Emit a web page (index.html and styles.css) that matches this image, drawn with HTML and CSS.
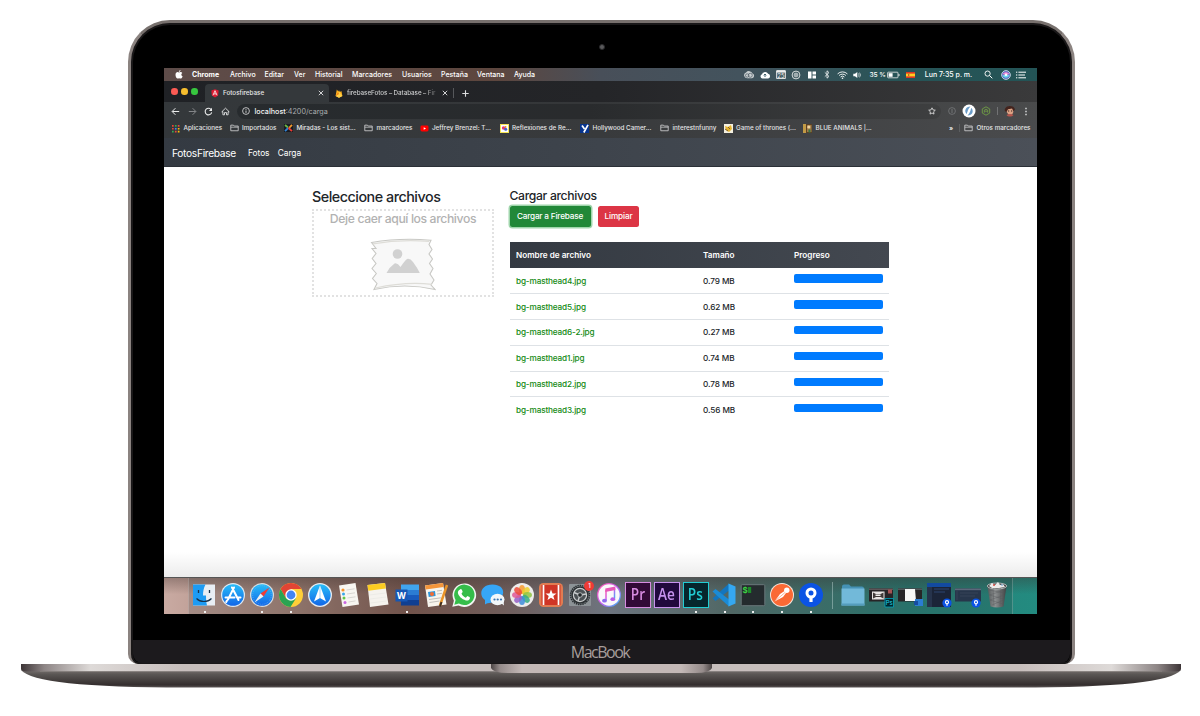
FILE: index.html
```html
<!DOCTYPE html>
<html lang="es">
<head>
<meta charset="utf-8">
<title>FotosFirebase</title>
<link rel="stylesheet" href="styles.css">
</head>
<body>
<svg class="defs" width="0" height="0" aria-hidden="true">
  <defs>
    <symbol id="folder" viewBox="0 0 10 9"><path d="M.8 7.600V1.300h3l.9 1h4.500v5.300z" fill="none" stroke="#d5d6d7" stroke-width=".9"/><path d="M.8 3.600h8.400" stroke="#d5d6d7" stroke-width=".8"/></symbol>
    <symbol id="close" viewBox="0 0 6 6"><path d="M.8.8l4.400 4.400M5.200.8L.8 5.200" stroke="#e3e4e5" stroke-width=".9"/></symbol>
    <symbol id="tree" viewBox="0 0 26 26"><circle cx="13" cy="13" r="12" fill="#0b53e4"/><circle cx="13" cy="11" r="4" fill="none" stroke="#fff" stroke-width="3"/><path d="M11.400 14h3.200v6h-3.200z" fill="#fff"/></symbol>
    <linearGradient id="blue" x2="0" y2="1"><stop stop-color="#28bdf8"/><stop offset="1" stop-color="#1266e8"/></linearGradient>
    <linearGradient id="lip" x2="1" y2="0"><stop stop-color="#3d3537"/><stop offset=".02" stop-color="#8d8585"/><stop offset=".06" stop-color="#dedad8"/><stop offset=".14" stop-color="#c7bebc"/><stop offset=".86" stop-color="#c7bebc"/><stop offset=".94" stop-color="#dedad8"/><stop offset=".98" stop-color="#8d8585"/><stop offset="1" stop-color="#3d3537"/></linearGradient>
    <linearGradient id="belly" x2="0" y2="1"><stop stop-color="#77716f"/><stop offset=".25" stop-color="#5a5654"/><stop offset=".85" stop-color="#342e2e"/><stop offset="1" stop-color="#5b5555"/></linearGradient>
    <linearGradient id="notch" x2="1" y2="0"><stop stop-color="#4c4545"/><stop offset=".04" stop-color="#958b8a"/><stop offset=".14" stop-color="#c3b8b6"/><stop offset=".86" stop-color="#c3b8b6"/><stop offset=".96" stop-color="#958b8a"/><stop offset="1" stop-color="#4c4545"/></linearGradient>
    <linearGradient id="music" x2="1" y2="1"><stop stop-color="#ff5ca8"/><stop offset=".5" stop-color="#c75bf0"/><stop offset="1" stop-color="#2dbdf5"/></linearGradient>
    <linearGradient id="can" x2="1" y2="0"><stop stop-color="#55595a"/><stop offset=".4" stop-color="#8d9091"/><stop offset="1" stop-color="#3e4142"/></linearGradient>
  </defs>
</svg>
<div class="laptop">
  <div class="lid">
    <div class="bezel-top"><span class="camera"></span></div>
    <div class="screen">
      <div class="menubar">
        <svg class="apple" width="8" height="9" viewBox="0 0 8 9"><path d="M5.500 0C5.600 1 4.800 1.900 3.900 1.900 3.800 1 4.600.1 5.500 0zM4 2.400c.4 0 .9-.4 1.700-.4.6 0 1.200.3 1.600.9C5.900 3.700 6.100 5.700 7.600 6.200 7.200 7.400 6.400 8.600 5.600 8.600 5.100 8.600 4.800 8.300 4.100 8.300 3.500 8.300 3.100 8.600 2.600 8.600 1.700 8.600.5 6.700.5 4.900.5 3.100 1.600 2.100 2.600 2.100c.6 0 1.100.3 1.400.3z" fill="#fff"/></svg>
        <b>Chrome</b><span>Archivo</span><span>Editar</span><span>Ver</span><span>Historial</span><span>Marcadores</span><span>Usuarios</span><span>Pestaña</span><span>Ventana</span><span>Ayuda</span>
        <div class="status">
          <svg width="12" height="8" viewBox="0 0 12 8"><path d="M4 7.300a3 3 0 01-1-5.800A3.800 3.800 0 019.500 2.500a2.500 2.500 0 01-.5 4.800z" fill="#c9cfd1"/><circle cx="4.200" cy="4.500" r="1.700" fill="none" stroke="#4b5862" stroke-width=".7"/><circle cx="7.300" cy="4.300" r="2" fill="none" stroke="#4b5862" stroke-width=".7"/></svg>
          <svg width="12" height="8" viewBox="0 0 12 8"><path d="M3.500 7.500a2.200 2.200 0 01-.4-4.300 3.200 3.200 0 016-.4 2.400 2.400 0 01.1 4.700z" fill="#fff"/><path d="M6 6V3.200M4.700 4.300L6 3l1.300 1.300" fill="none" stroke="#42606a"/></svg>
          <svg width="10" height="9" viewBox="0 0 10 9"><path d="M.7.600h8.600v8H.7z" fill="none" stroke="#eee"/><path d="M.5 1.800h9" stroke="#eee" stroke-width="1.600"/><text x="5" y="7.600" font-size="5.500" text-anchor="middle" fill="#eee">25</text></svg>
          <svg width="10" height="10" viewBox="0 0 10 10"><circle cx="5" cy="5" r="3.900" fill="none" stroke="#e8eaea" stroke-width=".9"/><circle cx="5" cy="5" r="1.900" fill="none" stroke="#e8eaea" stroke-width=".8"/><path d="M5 4v2" stroke="#fff"/></svg>
          <svg width="8" height="8" viewBox="0 0 8 8"><path d="M0 .5h3.500v7H0zM4.500.5H8V3.600H4.500zM4.500 4.600H8V7.500H4.500z" fill="#fff"/></svg>
          <svg width="6" height="9" viewBox="0 0 6 9"><path d="M.8 2.400l4.200 4L3 8.200V.8L5 2.600l-4.200 4" fill="none" stroke="#fff" stroke-width=".75"/></svg>
          <svg width="11" height="8" viewBox="0 0 11 8"><path d="M.6 2.900a7 7 0 019.800 0M2.100 4.500a4.900 4.900 0 016.800 0M3.600 6a2.800 2.800 0 013.800 0" fill="none" stroke="#fff" stroke-width=".9"/><circle cx="5.500" cy="7.200" r=".8" fill="#fff"/></svg>
          <svg width="8" height="8" viewBox="0 0 8 8"><path d="M.3 2.700h1.700L4.300.9v6.200L2 5.300H.3z" fill="#fff"/><path d="M5.400 2.400a2.400 2.400 0 010 3.200M6.500 1.600a3.600 3.600 0 010 4.800" fill="none" stroke="#fff" stroke-width=".6"/></svg>
          <span class="percent">35 %</span>
          <svg width="13" height="8" viewBox="0 0 13 8"><rect x=".6" y="1.200" width="10.400" height="5.600" rx=".8" fill="none" stroke="#eee" stroke-width=".8"/><path d="M1.600 2.200h4v3.600h-4z" fill="#fff"/><path d="M12 3v2" stroke="#eee" stroke-width=".9"/></svg>
          <svg width="9" height="6" viewBox="0 0 9 6"><path d="M0 0h9v6H0z" fill="#dd3524"/><path d="M0 1.600h9v2.800H0z" fill="#ffce20"/><path d="M2 2h1.300v2H2z" fill="#b36b28"/></svg>
          <span class="clock">Lun 7:35 p. m.</span>
          <svg width="9" height="9" viewBox="0 0 9 9"><circle cx="3.600" cy="3.600" r="2.600" fill="none" stroke="#fff" stroke-width=".9"/><path d="M5.500 5.500L8.300 8.300" stroke="#fff"/></svg>
          <svg width="10" height="10" viewBox="0 0 10 10"><circle cx="5" cy="5" r="4.400" fill="#5b6fc2" stroke="#d6e5ec" stroke-width=".8"/><path d="M1.500 4c2-2.500 5-2.500 7 0-2 1-5 1-7 0z" fill="#ef86d2"/><path d="M1.400 5.500c2 3 5 3 7.200 0-2-1-5-1-7.200 0z" fill="#6bd9f2"/><circle cx="5" cy="4.800" r="1.300" fill="#fff"/></svg>
          <svg width="10" height="8" viewBox="0 0 10 8"><path d="M2.400 1.200H10M2.400 4H9M2.400 6.800H10M0 1.200h1.300M0 4h1.300M0 6.800h1.300" stroke="#fff"/></svg>
        </div>
      </div>
      <div class="tabs">
        <div class="lights"><i class="red"></i><i class="amber"></i><i class="green"></i></div>
        <div class="tab active">
          <svg width="8" height="9" viewBox="0 0 8 9"><path d="M4 .3l3.700 1.300-.6 5L4 8.600.9 6.600l-.6-5z" fill="#dd1b32"/><path d="M2 6.300L4 1.700l2 4.600M2.900 4.900h2.200" fill="none" stroke="#fff" stroke-width=".8"/></svg>
          <span>Fotosfirebase</span>
          <svg class="x" width="6" height="6"><use href="#close"/></svg>
        </div>
        <div class="tab">
          <svg width="8" height="9" viewBox="0 0 8 9"><path d="M.6 7L1.800.5l1.500 2L4 1.300l.9 1.700L6.400 2l1 5L4 8.800z" fill="#ffb41f"/><path d="M.6 7l3.800-4.200L5.600 5 7.400 7 4 8.800z" fill="#ffd24b"/><path d="M.6 7L3 3.200l1.200 1.900z" fill="#f48212"/></svg>
          <span class="faded">firebaseFotos – Database – Fir</span>
          <svg class="x" width="6" height="6"><use href="#close"/></svg>
        </div>
        <span class="tab-divider"></span>
        <svg class="plus" width="7" height="7" viewBox="0 0 7 7"><path d="M3.500.3v6.400M.3 3.500h6.400" stroke="#dddedf" stroke-width="1.100"/></svg>
      </div>
      <div class="toolbar">
        <div class="nav-icons">
          <svg width="9" height="9" viewBox="0 0 9 9"><path d="M8.200 4.500H1.300M4.400 1.200L1.100 4.500l3.300 3.300" fill="none" stroke="#eceded" stroke-width="1"/></svg>
          <svg width="9" height="9" viewBox="0 0 9 9"><path d="M.8 4.500h6.900M4.600 1.200l3.300 3.300-3.300 3.300" fill="none" stroke="#8d9092" stroke-width=".9"/></svg>
          <svg width="9" height="9" viewBox="0 0 9 9"><path d="M7.400 3A3.300 3.300 0 107.700 5.300" fill="none" stroke="#eceded" stroke-width="1.100"/><path d="M8 .8v3.100H4.900z" fill="#eceded"/></svg>
          <svg width="9" height="9" viewBox="0 0 9 9"><path d="M.8 4.800L4.500 1.200l3.700 3.600H7.100v3H5.500V5.600h-2v2.200H1.900v-3z" fill="none" stroke="#eceded" stroke-width=".85"/></svg>
        </div>
        <div class="url">
          <svg width="8" height="8" viewBox="0 0 8 8"><circle cx="4" cy="4" r="3.400" fill="none" stroke="#dfe0e1" stroke-width=".8"/><path d="M4 3.500v2.400M4 2v.8" stroke="#dfe0e1" stroke-width=".9"/></svg>
          <span>localhost<em>:4200/carga</em></span>
          <svg class="star" width="8" height="8" viewBox="0 0 8 8"><path d="M4 .8l1 2.100 2.300.3-1.700 1.600.4 2.300-2-1.100-2 1.100.4-2.300L.7 3.200 3 2.900z" fill="none" stroke="#e8e9e9" stroke-width=".8"/></svg>
        </div>
        <div class="extensions">
          <svg width="8" height="8" viewBox="0 0 8 8"><circle cx="4" cy="4" r="3.400" fill="none" stroke="#77797b" stroke-width=".8"/><path d="M4 2v4" stroke="#77797b" stroke-width=".9"/></svg>
          <svg width="14" height="14" viewBox="0 0 14 14"><circle cx="7" cy="7" r="6.500" fill="#fff"/><path d="M8.500 2.500C3.500 2.500 2 7 4.500 10 5.500 9.500 5 6 8.500 2.500zM5.500 11.500C10.500 11.500 12 7 9.500 4 8.500 4.500 9 8 5.500 11.500z" fill="#6a9cc8"/></svg>
          <svg width="10" height="10" viewBox="0 0 10 10"><path d="M5 .8l3.700 2.100v4.200L5 9.200 1.300 7.100V2.900z" fill="none" stroke="#719f45" stroke-width=".9"/><path d="M3.300 6.700V4.200L5 3.300l1.700.9v2.500M3.300 5.200h3.400" fill="none" stroke="#719f45" stroke-width=".8"/></svg>
          <i class="bar"></i>
          <svg width="12" height="12" viewBox="0 0 12 12"><path d="M2 5c0-5 8-4.500 7.500.5C9.200 8.500 8 10 6.500 10S2.500 8 2 5z" fill="#dda284"/><path d="M.8 6C0 0 10-.8 11 4.500l-1.500 1.800L8 3.500 4 4.200 2.500 7z" fill="#42231d"/><path d="M2.500 10c2-1.500 5-1.500 7 0-1.500 2-5.500 2-7 0z" fill="#b5564d"/><path d="M4 6h1.200M7 6h1.200" stroke="#352421"/></svg>
          <svg width="4" height="9" viewBox="0 0 4 9"><path d="M1.300.8h1.400v1.400H1.300zM1.300 3.800h1.400v1.400H1.300zM1.300 6.800h1.400v1.400H1.300z" fill="#dedfe0"/></svg>
        </div>
      </div>
      <div class="bookmarks">
        <div><svg width="9" height="9" viewBox="0 0 9 9"><path d="M1 1h1.700v1.700H1zM1 3.900h1.700v1.700H1z" fill="#ea4335"/><path d="M3.900 1h1.700v1.700H3.900zM1 6.800h1.700v1.700H1z" fill="#36a852"/><path d="M6.800 1h1.700v1.700H6.800zM3.900 6.800h1.700v1.700H3.900z" fill="#e94b3c"/><path d="M3.900 3.900h1.700v1.700H3.900z" fill="#4285f4"/><path d="M6.800 3.900h1.700v1.700H6.800zM6.800 6.800h1.700v1.700H6.800z" fill="#fbbc05"/></svg>Aplicaciones</div>
        <div><svg width="9" height="8"><use href="#folder"/></svg>Importados</div>
        <div><svg width="9" height="8" viewBox="0 0 9 8"><path d="M0 0h9v8H0z" fill="#191c22"/><path d="M1 1l3 2.500" stroke="#6bb743" stroke-width="1.800"/><path d="M8 .8L5 4" stroke="#f59a2d" stroke-width="1.800"/><path d="M1 7.200L4.200 4" stroke="#3083d5" stroke-width="1.800"/><path d="M8 7.200L4.500 4" stroke="#ea3b32" stroke-width="1.800"/></svg>Miradas - Los sist...</div>
        <div><svg width="9" height="8"><use href="#folder"/></svg>marcadores</div>
        <div><svg width="9" height="7" viewBox="0 0 9 7"><rect x=".5" y=".5" width="8" height="6" rx="1.400" fill="#f00"/><path d="M3.700 2.200v2.600L6 3.500z" fill="#fff"/></svg>Jeffrey Brenzel: T...</div>
        <div><svg width="9" height="9" viewBox="0 0 9 9"><path d="M0 0h9v9H0z" fill="#f5e456"/><path d="M1 1h7v7H1z" fill="#fff"/><circle cx="3.500" cy="4" r="1.700" fill="#e63b70"/><circle cx="5.700" cy="5.300" r="1.500" fill="#4560c9"/><circle cx="5.500" cy="3" r="1" fill="#eb8b2b"/></svg>Reflexiones de Re...</div>
        <div><svg width="9" height="9" viewBox="0 0 9 9"><path d="M0 0h9v9H0z" fill="#07348e"/><path d="M2 1.500l2.500 3.600M8 .8L3.800 8.500" stroke="#fff" stroke-width="1.700"/></svg>Hollywood Camer...</div>
        <div><svg width="9" height="8"><use href="#folder"/></svg>interestnfunny</div>
        <div><svg width="9" height="9" viewBox="0 0 9 9"><path d="M0 0h9v9H0z" fill="#f5f0e0"/><path d="M1 2l3 1 3-2 1 4-3 3-3-2z" fill="#e5b32c"/><path d="M1 5l3 2M4 3l2 2" stroke="#805b2b"/></svg>Game of thrones (...</div>
        <div><svg width="9" height="9" viewBox="0 0 9 9"><path d="M0 0h9v9H0z" fill="#5a4025"/><path d="M0 0h3v9H0z" fill="#c29a45"/><path d="M4 1h4.500v7H4z" fill="#a27c47"/><circle cx="5.800" cy="3" r="1.600" fill="#edd29f"/><path d="M5.500 5.500h2v3h-2z" fill="#367447"/></svg>BLUE ANIMALS |...</div>
        <b>»</b>
        <div class="other"><svg width="9" height="8"><use href="#folder"/></svg>Otros marcadores</div>
      </div>
      <nav class="navbar"><a class="brand">FotosFirebase</a><a>Fotos</a><a>Carga</a></nav>
      <main class="page">
        <section class="pick">
          <h1>Seleccione archivos</h1>
          <div class="drop">
            <p>Deje caer aquí los archivos</p>
            <svg width="66" height="54" viewBox="0 0 66 54"><path d="M1.500 4.500Q30-.5 61 2.200L59 6.500l3 5-3 4.500 3.500 5-3 4.500 3.500 5-3 5.500 4 6-3 5 4 4.500Q35 44.500 4 51.500l3-6-4.500-5 3.800-5-4.300-5 4-5-3.800-5 3.800-5-4-5L6 10.500z" fill="#f8f8f8" stroke="#c8c8c4" stroke-width="1.100"/><path d="M3 5.800Q30 1 59 3.300M5.500 50Q35 43.500 62 46.300" fill="none" stroke="#deddd8" stroke-width="1.200"/><circle cx="27.500" cy="16" r="4.800" fill="#d1d1d1"/><path d="M16.500 35q3-6 8-9.500 3-1 6 3.500 4-6 6.500-8 3-1 6 3 4.500 6 6.800 11z" fill="#d1d1d1"/></svg>
          </div>
        </section>
        <section class="upload">
          <h2>Cargar archivos</h2>
          <div class="buttons"><button class="btn save">Cargar a Firebase</button><button class="btn clear">Limpiar</button></div>
          <table>
            <thead><tr><th class="name">Nombre de archivo</th><th class="size">Tamaño</th><th>Progreso</th></tr></thead>
            <tbody>
              <tr><td>bg-masthead4.jpg</td><td>0.79 MB</td><td><div class="progress"></div></td></tr>
              <tr><td>bg-masthead5.jpg</td><td>0.62 MB</td><td><div class="progress"></div></td></tr>
              <tr><td>bg-masthead6-2.jpg</td><td>0.27 MB</td><td><div class="progress"></div></td></tr>
              <tr><td>bg-masthead1.jpg</td><td>0.74 MB</td><td><div class="progress"></div></td></tr>
              <tr><td>bg-masthead2.jpg</td><td>0.78 MB</td><td><div class="progress"></div></td></tr>
              <tr><td>bg-masthead3.jpg</td><td>0.56 MB</td><td><div class="progress"></div></td></tr>
            </tbody>
          </table>
        </section>
      </main>
      <div class="desktop">
        <div class="dock">
          <div class="app on"><svg viewBox="0 0 26 26"><path d="M2 2.500h22v21H2z" fill="#e8eef4"/><path d="M2 2.500h12.500c-2 4-2.500 7-2.500 11h3c0 4 .3 7 1 10H2z" fill="#1d9bf3"/><path d="M7.500 8v3M18.500 8v3" stroke="#16324c" stroke-width="1.300"/><path d="M5.500 16.500c4 4 11 4 15 0" fill="none" stroke="#16324c" stroke-width="1.200"/></svg></div>
          <div class="app"><svg viewBox="0 0 26 26"><circle cx="13" cy="13" r="12" fill="#dfe9f2"/><circle cx="13" cy="13" r="10.800" fill="url(#blue)"/><path d="M14 5.500L8 17.500M12 5.500l6.500 12.500M5.500 15.500h9M17 15.500h3.500M7 18.500l-.8 1.500" stroke="#fff" stroke-width="2" stroke-linecap="round"/></svg></div>
          <div class="app on"><svg viewBox="0 0 26 26"><circle cx="13" cy="13" r="12" fill="#d9dde0"/><circle cx="13" cy="13" r="10.800" fill="url(#blue)"/><circle cx="13" cy="13" r="9.300" fill="none" stroke="#76bdf2" stroke-width=".8" stroke-dasharray=".7 1.300"/><path d="M20.500 5.500L14.500 14.500 11.500 11.500z" fill="#f03b35"/><path d="M5.500 20.500L11.500 11.500 14.500 14.500z" fill="#eef0f2"/></svg></div>
          <div class="app on"><svg viewBox="0 0 26 26"><circle cx="13" cy="13" r="12" fill="#ffcf38"/><path d="M2.600 7A12 12 0 0123.400 7H13L7.800 16z" fill="#e14434"/><path d="M2.600 7A12 12 0 0012.500 25l5.700-9q-6 4-10.400 0z" fill="#2aa352"/><circle cx="13" cy="13" r="5.700" fill="#fff"/><circle cx="13" cy="13" r="4.400" fill="#4285f4"/></svg></div>
          <div class="app"><svg viewBox="0 0 26 26"><circle cx="13" cy="13" r="12" fill="#e8edf2"/><circle cx="13" cy="13" r="10.700" fill="url(#blue)"/><path d="M13 3.500l6 16-6-3.500-6 3.500z" fill="#fff"/><path d="M13 5v11" stroke="#8fc5f4" stroke-width=".8"/></svg></div>
          <div class="app"><svg viewBox="0 0 26 26"><path d="M3 3.500l16.500-2.500L23 22.500 6.500 25z" fill="#f8f6f1"/><circle cx="7" cy="8" r="1.600" fill="#f7932a"/><circle cx="7.500" cy="12" r="1.500" fill="#39a7e8"/><circle cx="8" cy="16" r="1.500" fill="#63c646"/><circle cx="9" cy="20.500" r="1.500" fill="#ca65e1"/><path d="M10.500 8l8-1.200M11 12l8-1.200M11.500 16l8-1.200M12.500 20l7-1.100" stroke="#ccc9c4" stroke-width=".7"/></svg></div>
          <div class="app"><svg viewBox="0 0 26 26"><path d="M2.500 3L20 1l3.500 21.500-18.500 2.500z" fill="#f5f3ee"/><path d="M2.500 3L20 1l.9 5.500L3.300 8.800z" fill="#fccc22"/><path d="M4.500 13l16-2M5 17l16-2M5.500 21l16-2" stroke="#e6e5e1" stroke-width=".6"/></svg></div>
          <div class="app on"><svg viewBox="0 0 26 26"><path d="M7 2.500h18v6H7z" fill="#41a5ee"/><path d="M7 8h18v5.500H7z" fill="#2b7cd3"/><path d="M7 13h18v5.500H7z" fill="#185abd"/><path d="M7 18h18v5.500H7z" fill="#103f91"/><path d="M1.500 7.500h12v12h-12z" fill="#1557b5"/><text x="7.500" y="17" text-anchor="middle" font-size="9" font-weight="700" fill="#fff">W</text></svg></div>
          <div class="app"><svg viewBox="0 0 26 26"><path d="M2 3.500L20 1l3.500 21.500L5 25z" fill="#f7f5ee"/><path d="M2 3.500L20 1l.7 4-18 2.500z" fill="#f3953b"/><path d="M5 10l7-1 .6 5-6.900 1z" fill="#2f96da"/><circle cx="9" cy="12" r="2" fill="#f46d31"/><path d="M14 9l5-.7M14 12l5-.7M6 17.500l12-1.700M6.500 20.500l10-1.500" stroke="#b4b3ae" stroke-width=".8"/><path d="M24 3L17 23.500" stroke="#e9942a" stroke-width="2.500"/><path d="M18.500 20L17 24.500" stroke="#403023" stroke-width="2"/></svg></div>
          <div class="app"><svg viewBox="0 0 26 26"><path d="M1.300 24.700l1.600-6A11.800 11.800 0 1113 25a12 12 0 01-5.500-1.500z" fill="#f2f5f2"/><path d="M3.300 22.700l1.300-4.600A10.200 10.200 0 1113 23a10 10 0 01-5.100-1.400z" fill="#35bd4a"/><path d="M9.400 7.200c1-.9 2 1.700 2.300 2.700L10.500 11.500c.8 2 2.400 3.400 4.300 4.200l1.600-1.600c1.300.5 2.500 1 2.600 1.800-.2 2-2.300 3-4.100 2.500-4.300-1-7.300-4.300-8-7.300-.2-1.500.8-3.300 2.500-3.900z" fill="#fff"/></svg></div>
          <div class="app"><svg viewBox="0 0 26 26"><path d="M5 18C-2 13 1 2.500 12.500 2.500S26 12 19.500 17 8 20 5 22.500z" fill="#36a6f7"/><ellipse cx="17.500" cy="17.500" rx="7" ry="5.700" fill="#f2f7fa"/><path d="M21 21l3 2.500-.5-4.500z" fill="#f2f7fa"/><circle cx="14.500" cy="17.500" r="1.100" fill="#3774b0"/><circle cx="17.700" cy="17.500" r="1.100" fill="#3774b0"/><circle cx="21" cy="17.500" r="1.100" fill="#3774b0"/></svg></div>
          <div class="app"><svg viewBox="0 0 26 26"><circle cx="13" cy="13" r="12" fill="#eeeceb"/><g fill-opacity=".85"><ellipse cx="13" cy="7.500" rx="3" ry="4.500" fill="#f79b2f"/><ellipse cx="13" cy="7.500" rx="3" ry="4.500" fill="#ebcf2d" transform="rotate(45 13 13)"/><ellipse cx="13" cy="7.500" rx="3" ry="4.500" fill="#8fc641" transform="rotate(90 13 13)"/><ellipse cx="13" cy="7.500" rx="3" ry="4.500" fill="#35ad83" transform="rotate(135 13 13)"/><ellipse cx="13" cy="7.500" rx="3" ry="4.500" fill="#3d8ddb" transform="rotate(180 13 13)"/><ellipse cx="13" cy="7.500" rx="3" ry="4.500" fill="#9560c7" transform="rotate(225 13 13)"/><ellipse cx="13" cy="7.500" rx="3" ry="4.500" fill="#df5897" transform="rotate(270 13 13)"/><ellipse cx="13" cy="7.500" rx="3" ry="4.500" fill="#ec4b38" transform="rotate(315 13 13)"/></g></svg></div>
          <div class="app"><svg viewBox="0 0 26 26"><rect x="1" y="1" width="24" height="24" rx="4.500" fill="#e17b51"/><path d="M3.500 3h19v20h-19z" fill="#cf3526"/><path d="M5.500 3v20M20.500 3v20" stroke="#fff" stroke-width="1.700"/><path d="M13 7.500l1.500 3.900 4 .2-3.200 2.500 1.200 4-3.500-2.400-3.500 2.400 1.200-4-3.200-2.500 4-.2z" fill="#fff"/></svg></div>
          <div class="app"><svg viewBox="0 0 26 26"><rect x="2" y="2" width="22" height="22" rx="1" fill="#8d9397"/><circle cx="13" cy="13" r="9.500" fill="none" stroke="#2b3033" stroke-width="1.500" stroke-dasharray="1.500 .7"/><circle cx="13" cy="13" r="8.700" fill="#2b3033"/><circle cx="13" cy="13" r="6.600" fill="#4b5154" stroke="#c9cccd" stroke-width="1.200"/><path d="M13 13L7 10.500M13 13l6.200-1M13 13l-2 6" stroke="#c9cccd" stroke-width="1.400"/><circle cx="13" cy="13" r="2.300" fill="#22282a" stroke="#c9cccd" stroke-width=".8"/></svg><b class="badge">1</b></div>
          <div class="app"><svg viewBox="0 0 26 26"><circle cx="13" cy="13" r="12" fill="url(#music)"/><circle cx="13" cy="13" r="10.700" fill="#faf8fb"/><path d="M10 18.500V8.500l8.500-1.800v10" fill="none" stroke="url(#music)" stroke-width="1.500"/><path d="M9.300 6.600l10-2v3.400l-10 2z" fill="#e758b8"/><ellipse cx="8.500" cy="18.700" rx="2.400" ry="1.900" fill="#8c69ee"/><ellipse cx="16.800" cy="17.200" rx="2.400" ry="1.900" fill="#ba5be6"/></svg></div>
          <div class="app tile pr"><span>Pr</span></div>
          <div class="app tile ae"><span>Ae</span></div>
          <div class="app tile ps on"><span>Ps</span></div>
          <div class="app on"><svg viewBox="0 0 26 26"><path d="M18 1.500v7L4.500 19 1.500 16.500z" fill="#1375bd"/><path d="M18 24.500v-7L4.500 7 1.500 9.500z" fill="#1b8bd6"/><path d="M17.500 1.500l7 3v17l-7 3z" fill="#35a8f0"/></svg></div>
          <div class="app on"><svg viewBox="0 0 26 26"><rect x="1.200" y="2.700" width="23.600" height="21" rx="1" fill="#242b2e" stroke="#69777a"/><text x="2.600" y="11" font-size="8" font-weight="700" fill="#3bd342">$</text><path d="M8 5h3.200v6H8z" fill="#1b8c29"/></svg></div>
          <div class="app on"><svg viewBox="0 0 26 26"><circle cx="13" cy="13" r="12" fill="#f3e6de"/><circle cx="13" cy="13" r="11" fill="#fa6934"/><path d="M5.500 19.500L11 12l4.500-3 1.500 2-3 4z" fill="#fff"/><circle cx="17.800" cy="8.200" r="2.700" fill="#fff"/><path d="M6 19l10-8.500" stroke="#f5936c" stroke-width=".7"/></svg></div>
          <div class="app on"><svg viewBox="0 0 26 26"><use href="#tree"/></svg></div>
          <i class="separator"></i>
          <div class="app"><svg viewBox="0 0 26 26"><path d="M2 4.500q0-2 2-2h5l2 2h11q2 0 2 2v14H2z" fill="#4592b5"/><path d="M1.500 6.500h23v17h-23z" fill="#72b9d9"/><path d="M1.500 22.500h23" stroke="#559dbd" stroke-width="2"/></svg></div>
          <div class="app"><svg viewBox="0 0 26 26"><path d="M1 6.500h24v13H1z" fill="#272426"/><path d="M1 6.500h24v1.500H1z" fill="#5e5558"/><path d="M4 9.500h12.500v8H4z" fill="#e8e4e2"/><path d="M5 10.500l3 1.500h4.500l3-1.500v6l-3-1.500H8l-3 1.500z" fill="#413a38"/><path d="M7.500 12.500h5v1.500h-5z" fill="#f1eeec"/><path d="M20 7.500h4v4h-4z" fill="#a45353"/><path d="M17 16.500h8.500V25H17z" fill="#00252d" stroke="#00a5bc" stroke-width=".8"/><text x="21.200" y="23" text-anchor="middle" font-size="6" fill="#25d6e5">Ps</text></svg></div>
          <div class="app"><svg viewBox="0 0 26 26"><path d="M1 6.500h24v13H1z" fill="#272527"/><path d="M1 6.500h24V8H1z" fill="#52575a"/><path d="M8 7h10l1 12H8z" fill="#f7f7f6"/><path d="M18 17h8v7h-8z" fill="#2b7cd3"/><path d="M17 19h4v4h-4z" fill="#174da0"/></svg></div>
          <div class="app"><svg viewBox="0 0 26 26"><path d="M1 1h24v24H1z" fill="#1b2438"/><path d="M1 1h24v4H1z" fill="#124aa0"/><path d="M1 5h5v20H1z" fill="#26334c"/><path d="M8 7h15M8 10h11" stroke="#34538b" stroke-width=".7"/><use href="#tree" x="16" y="16" width="10" height="10"/></svg></div>
          <div class="app"><svg viewBox="0 0 26 26"><path d="M0 6.500h26v13H0z" fill="#27364b"/><path d="M0 6.500h26v1.700H0z" fill="#5d687b"/><path d="M2 9v9M5 11h18M5 14h15" stroke="#3b485b" stroke-width=".8"/><use href="#tree" x="16" y="16" width="10" height="10"/></svg></div>
          <div class="app"><svg viewBox="0 0 26 26"><path d="M3.500 4h19l-3 20.500q-6.500 2-13 0z" fill="url(#can)"/><path d="M5 8l15 3M5.500 13l14 4M6 18l13 4M20.500 8l-15 5M20 13l-14 5M19.500 18L8 23M9 6l1 18M17 6l-1 18" stroke="#55595a" stroke-width=".4"/><ellipse cx="13" cy="4" rx="9.700" ry="3" fill="#404344" stroke="#b0b5b5"/><path d="M5 4l3-3 3 2 3-3 2 3 3-1 2 3-6 1H8z" fill="#ecebea"/><circle cx="10" cy="3" r="1" fill="#d5473e"/><circle cx="18" cy="3" r=".8" fill="#5a97cb"/></svg></div>
        </div>
      </div>
    </div>
    <div class="chin"><span>MacBook</span></div>
  </div>
  <svg class="base" width="1162" height="26" viewBox="0 0 1162 26"><path d="M1 6Q15 23.500 165 23.500H997Q1147 23.500 1161 6z" fill="url(#belly)"/><path d="M1 0h1160v5q0 2-5 2.500H6Q1 7 1 5z" fill="url(#lip)"/><path d="M20 7.500h1122" stroke="#837c7a" stroke-width=".8"/><path d="M471 0h221v4q-2 5-17 5H488q-15 0-17-5z" fill="url(#notch)"/></svg>
</div>
</body>
</html>
```

FILE: styles.css
```css
* { box-sizing: border-box; }
body { margin: 0; background: #fff; font-family: Inter, "Open Sans", sans-serif; color: #212529; overflow: hidden; }
svg { display: block; flex: none; }
.defs { position: absolute; }
.laptop { width: 1200px; height: 716px; padding-top: 20px; display: flex; flex-direction: column; align-items: center; }
.lid { width: 947px; height: 644px; margin-left: 3px; background: #000; border: 3px solid #8b8380; border-bottom-width: 0; border-top-color: #77706d; border-radius: 42px 42px 10px 10px; box-shadow: inset 0 0 0 2px #191718; display: flex; flex-direction: column; align-items: center; }
.bezel-top { height: 45px; padding-top: 21px; }
.camera { display: block; width: 6px; height: 6px; border-radius: 50%; background: #59595b; border: 1.500px solid #29292b; }
.screen { width: 873px; height: 546px; background: #fff; margin-left: -2px; overflow: hidden; display: flex; flex-direction: column; flex: none; }
.chin { width: 937px; height: 23px; margin-top: 26px; background: #1c1a1d; border-radius: 0 0 9px 9px; display: flex; justify-content: center; align-items: center; font: 16px "Open Sans", sans-serif; letter-spacing: -1.500px; color: #a79e9b; padding: 1px 3px 0 0; }

.menubar { height: 13px; flex: none; display: grid; grid-template-columns: 17px 38px 34.500px 29.500px 21px 37px 50px 39px 36px 37px 36px 1fr; align-items: center; padding: 0 5.500px 0 11px; font-size: 7px; font-weight: 500; line-height: 10px; color: #fff; white-space: nowrap; background: linear-gradient(90deg, #5e4c49, #5d463e 38%, #484f59 50%, #43535d 66%, #275457 84%, #235456); }
.menubar .apple { margin-left: -.5px; }
.menubar b { font-weight: 700; }
.status { justify-self: end; display: grid; grid-template-columns: 16px 16px 15.500px 15.500px 16px 14.500px 16px 13px 23px 13px 22px 54px 26px 8px 22px; align-items: center; justify-items: center; }
.percent { justify-self: start; padding-left: 6px; font-size: 6.700px; letter-spacing: -.1px; }

.tabs { height: 21px; flex: none; display: flex; align-items: flex-end; font-size: 6.300px; font-weight: 500; color: #e6e7e8; background: linear-gradient(90deg, #1f2125, #242528 50%, #3a3a3b); }
.lights { width: 41px; height: 21px; padding-left: 7px; display: flex; gap: 3.500px; align-items: center; }
.lights i { width: 6.500px; height: 6.500px; border-radius: 50%; }
.red { background: #fc5b54; }
.amber { background: #f6bd2e; }
.green { background: #37c63f; }
.tab { width: 124px; height: 18px; padding: 0 5px 0 5.500px; display: flex; align-items: center; gap: 4.500px; }
.tab.active { background: #34383b; border-radius: 4px 4px 0 0; }
.tab .x { margin-left: auto; }
.tab span { white-space: nowrap; }
.tab .faded { width: 92px; letter-spacing: -.07px; color: #c9cacb; -webkit-mask-image: linear-gradient(90deg, #000 84%, rgba(0, 0, 0, .15)); mask-image: linear-gradient(90deg, #000 84%, rgba(0, 0, 0, .15)); }
.tab-divider { width: 1px; height: 10px; background: #56585b; margin-bottom: 4px; }
.plus { margin: 0 0 5.500px 8px; }

.toolbar { height: 18px; flex: none; display: flex; align-items: center; padding-left: 7px; background: linear-gradient(90deg, #34383b, #353739 50%, #4a4b4c); }
.nav-icons { display: flex; gap: 7.600px; width: 66px; }
.url { width: 704px; height: 15px; border-radius: 8px; padding: 0 5px; display: flex; align-items: center; gap: 4.500px; font-size: 7.200px; font-weight: 500; color: #f2f2f3; background: linear-gradient(90deg, #272b2e, #292b2d 50%, #3e3f40); }
.url em { font-style: normal; font-weight: 400; color: #aaadae; }
.star { margin-left: auto; }
.extensions { display: grid; grid-template-columns: 17px 17px 17px 6px 18px 15px; margin-left: 2.500px; align-items: center; justify-items: center; }
.bar { width: 1px; height: 8px; background: #717274; }

.bookmarks { height: 18px; flex: none; display: grid; grid-template-columns: 58.500px 54.500px 80px 55.500px 80px 80.500px 80px 63.500px 79.500px 146px 10px 1fr; align-items: center; padding: 0 0 2px 7px; font-size: 6.300px; font-weight: 500; color: #e3e4e5; white-space: nowrap; background: linear-gradient(90deg, #33373a, #383a3c 50%, #4a4b4d); }
.bookmarks div { display: flex; align-items: center; gap: 3.500px; }
.bookmarks .other { border-left: 1px solid #5c5e60; padding-left: 4px; }

.navbar { height: 29px; flex: none; display: flex; align-items: center; padding: 1px 0 0 8px; font-size: 8.400px; color: #fff; background: linear-gradient(90deg, #343a42, #3e444c 50%, #4b5058); border-bottom: 1px solid #2b3037; }
.navbar a { margin-right: 8.200px; letter-spacing: -.05px; }
.navbar .brand { font-size: 10.200px; letter-spacing: -.3px; margin-right: 12px; }

.page { height: 410px; flex: none; display: grid; grid-template-columns: 182px 380px; column-gap: 15.500px; padding: 20.500px 0 0 148px; background: linear-gradient(#fff 385px, #ececec); align-items: start; }
h1, h2 { margin: 0; font-weight: 500; white-space: nowrap; }
h1 { font-size: 14.300px; line-height: 18px; height: 21.500px; letter-spacing: -.47px; }
h2 { font-size: 12.200px; line-height: 15px; height: 18.500px; letter-spacing: -.34px; }
.drop { height: 88px; border: 2px dotted #e2e2e2; display: flex; flex-direction: column; align-items: center; }
.drop p { margin: 0 0 11px; font-size: 12.200px; line-height: 16px; font-weight: 500; letter-spacing: -.38px; color: #b2b2b2; white-space: nowrap; }
.buttons { display: flex; gap: 7.500px; margin-bottom: 15px; }
.btn { height: 20.500px; padding: 0; border: 0; border-radius: 2.500px; font: 500 8.200px Inter, sans-serif; letter-spacing: -.18px; color: #fff; white-space: nowrap; }
.save { width: 81px; background: #218838; box-shadow: 0 0 0 1.500px #a0d5ac; }
.clear { width: 41px; background: #dc3545; letter-spacing: -.1px; }
table { width: 379.500px; border-collapse: collapse; table-layout: fixed; font-size: 8.200px; }
.name { width: 187px; }
.size { width: 91px; }
th { height: 26.500px; padding: 0 6.500px; text-align: left; font-weight: 600; color: #fff; }
thead { background: linear-gradient(90deg, #343a42, #434850); }
td { height: 25.800px; padding: 0 6.500px; font-weight: 500; letter-spacing: -.08px; border-bottom: 1px solid #dee2e6; }
tbody tr:last-child td { border: 0; }
td:first-child { color: #138a13; letter-spacing: -.14px; }
.progress { height: 8.500px; border-radius: 2px; background: #007bff; margin-bottom: 4.500px; }

.desktop { height: 37px; flex: none; padding-left: 24px; border-top: 1px solid #555; background: linear-gradient(rgba(60, 45, 42, .35), transparent 45%), linear-gradient(90deg, #c9aaa2, #a58378 15%, #825b51 28%, #806662 38%, #7c8491 51%, #587471 65%, #268077 85%, #238b80); }
.dock { width: 825px; height: 36px; padding-left: 1px; display: flex; background: rgba(50, 54, 54, .2); border-left: 1px solid rgba(255, 255, 255, .2); border-right: 1px solid rgba(255, 255, 255, .2); }
.app { width: 28.900px; flex: none; padding: 4px 1.450px 0; position: relative; }
.app svg { width: 26px; height: 26px; }
.app.on::after { content: ""; position: absolute; left: 13.500px; top: 32.500px; width: 2px; height: 2px; background: #eee; }
.badge { position: absolute; right: 0; top: 3px; width: 10px; height: 10px; border-radius: 50%; background: #ef3b36; color: #fff; font-size: 6px; font-weight: 500; line-height: 10px; text-align: center; }
.tile { padding-top: 5px; text-align: center; font: 600 17px/22px "Open Sans", sans-serif; isolation: isolate; }
.tile span { display: inline-block; margin: 0 -4px; transform: scaleX(.8); }
.tile::before { content: ""; position: absolute; inset: 4px 1.500px 6px; border: 1.500px solid; z-index: -1; }
.pr { color: #d68be0; }
.pr::before { background: #320a37; }
.ae { color: #c792ee; }
.ae::before { background: #21093d; }
.ps { color: #22cdd3; }
.ps::before { background: #06262d; }
.separator { width: 1px; height: 27px; margin: 4px 5.500px 0 6px; background: rgba(210, 230, 230, .4); }
.base { margin-left: 2px; }
```
